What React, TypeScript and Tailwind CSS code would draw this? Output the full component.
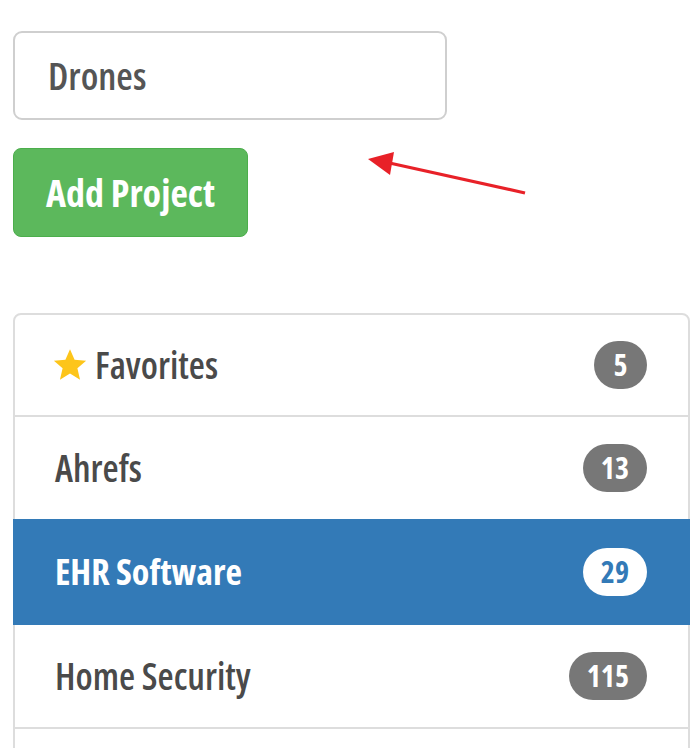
import React from "react";

const font = { fontFamily: '"Open Sans", "DejaVu Sans Condensed", sans-serif', fontStretch: "75%" } as React.CSSProperties;

function Badge({ n, active }: { n: string; active?: boolean }) {
  return (
    <span
      className={
        "h-[48px] min-w-[53px] px-[18px] rounded-full flex items-center justify-center text-[30px] font-bold leading-none " +
        (active ? "bg-white text-[#337ab7]" : "bg-[#777] text-white")
      }
    >
      {n}
    </span>
  );
}

export default function App() {
  return (
    <div className="relative w-[700px] h-[748px] overflow-hidden bg-white pt-[31px] pl-[13px]" style={font}>
      <div className="w-[434px] h-[89px] border-2 border-[#cfcfcf] rounded-[9px] flex items-center pl-[33px] text-[38px] font-semibold text-[#555]">
        Drones
      </div>
      <div className="mt-[28px] w-[235px] h-[89px] bg-[#5cb85c] border border-[#4cae4c] rounded-[8px] flex items-center justify-center text-[38px] font-bold text-white">
        Add Project
      </div>

      <svg className="absolute left-[360px] top-[145px]" width="175" height="60" viewBox="360 145 175 60">
        <line x1="525" y1="193" x2="385" y2="162" stroke="#e82128" strokeWidth="3.2" />
        <polygon points="368,159 394,152 390,175" fill="#e82128" />
      </svg>

      <div className="mt-[76px] w-[677px] border-2 border-[#ddd] rounded-[8px] text-[37px] font-semibold text-[#4a4a4a]">
        <div className="h-[100px] flex items-center justify-between pl-[37px] pr-[41px]">
          <span className="flex items-center gap-[7px]">
            <svg width="36" height="34" viewBox="0 0 24 23">
              <path d="M12 0.8 L15.1 8 L22.9 8.6 L17 13.7 L18.8 21.4 L12 17.3 L5.2 21.4 L7 13.7 L1.1 8.6 L8.9 8 Z" fill="#fdc51a" />
            </svg>
            Favorites
          </span>
          <Badge n="5" />
        </div>
        <div className="h-[104px] border-t-2 border-[#ddd] flex items-center justify-between pl-[40px] pr-[41px]">
          <span>Ahrefs</span>
          <Badge n="13" />
        </div>
        <div className="h-[106px] -mx-[2px] bg-[#337ab7] flex items-center justify-between pl-[42px] pr-[43px] text-white font-bold text-[36px]">
          <span>EHR Software</span>
          <Badge n="29" active />
        </div>
        <div className="h-[102px] flex items-center justify-between pl-[40px] pr-[41px]">
          <span>Home Security</span>
          <Badge n="115" />
        </div>
        <div className="h-[104px] border-t-2 border-[#ddd]"></div>
      </div>
    </div>
  );
}
